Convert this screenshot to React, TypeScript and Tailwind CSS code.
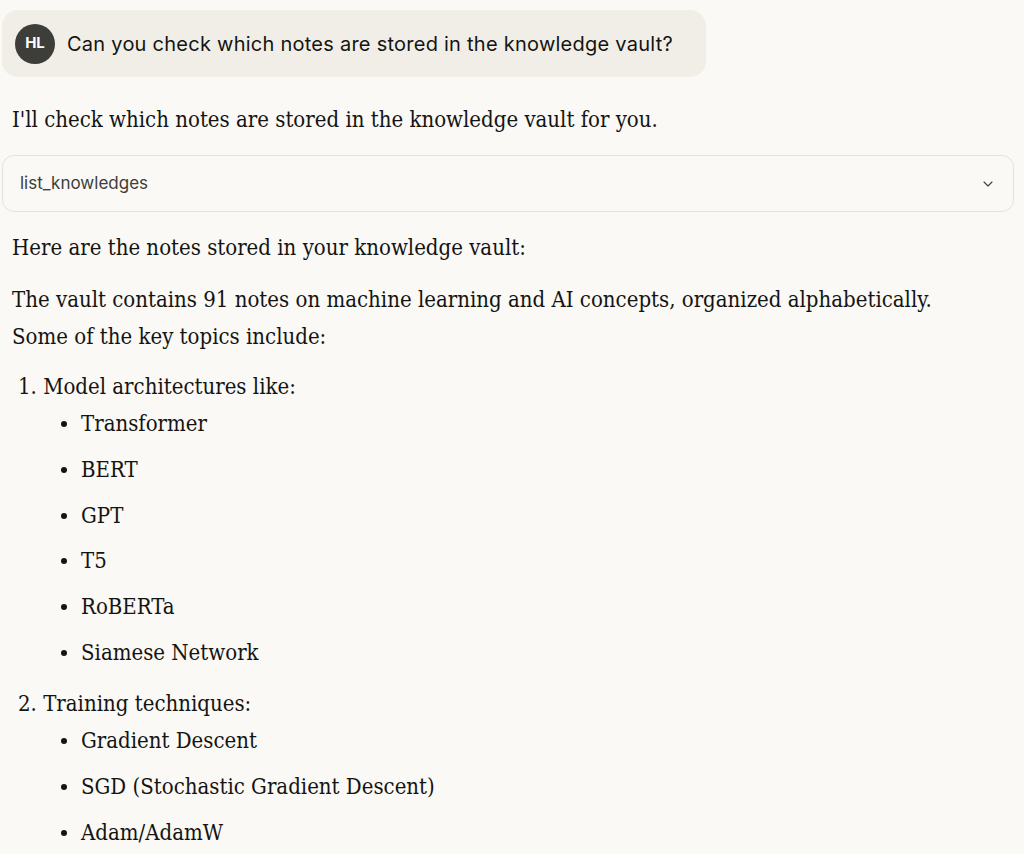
import { ChevronDown } from "lucide-react";

const architectures = ["Transformer", "BERT", "GPT", "T5", "RoBERTa", "Siamese Network"];
const techniques = ["Gradient Descent", "SGD (Stochastic Gradient Descent)", "Adam/AdamW"];

const serif = "font-['DejaVu_Serif_Condensed','DejaVu_Serif',serif] [font-stretch:condensed] text-[22px]";

function Bullets({ items }: { items: string[] }) {
	return (
		<ul className="flex flex-col gap-[13.8px] pl-[43px] pt-[5px]">
			{items.map((item) => (
				<li key={item} className="flex items-center gap-[14px] leading-[32px]">
					<span className="size-[6px] rounded-full bg-[#141413] shrink-0" />
					<span>{item}</span>
				</li>
			))}
		</ul>
	);
}

export default function App() {
	return (
		<div className="min-h-[854px] bg-[#faf9f5] text-[#141413] px-[2px] pt-[10px] overflow-hidden">
			<div className="w-[704px] h-[67px] rounded-[16px] bg-[#f0eee6] flex items-center gap-[12px] pl-[13px]">
				<div className="size-[40px] rounded-full bg-[#3d3d3a] text-white flex items-center justify-center text-[15px] font-bold font-['Inter',sans-serif] shrink-0">
					HL
				</div>
				<p className="font-['Inter',sans-serif] text-[20px] tracking-[0.25px]">
					Can you check which notes are stored in the knowledge vault?
				</p>
			</div>

			<div className={`${serif} px-[10px]`}>
				<p className="pt-[27px] leading-[32px]">I'll check which notes are stored in the knowledge vault for you.</p>
			</div>

			<div className="mt-[19px] mr-[8px] h-[57px] rounded-[12px] border border-[#e5e2d9] flex items-center justify-between pl-[17px] pr-[17px]">
				<span className="font-['Inter',sans-serif] text-[17px] text-[#3d3d3a]">list_knowledges</span>
				<ChevronDown className="size-[16px] text-[#3d3d3a]" strokeWidth={1.6} />
			</div>

			<div className={`${serif} pl-[10px] w-[990px]`}>
				<p className="pt-[20px] leading-[32px]">Here are the notes stored in your knowledge vault:</p>
				<p className="pt-[16.5px] leading-[37px]">
					The vault contains 91 notes on machine learning and AI concepts, organized alphabetically. Some of the
					key topics include:
				</p>
				<ol className="pt-[16.5px]">
					<li className="pl-[6px]">
						<div className="leading-[32px]">1. Model architectures like:</div>
						<Bullets items={architectures} />
					</li>
					<li className="pl-[6px] pt-[19px]">
						<div className="leading-[32px]">2. Training techniques:</div>
						<Bullets items={techniques} />
					</li>
				</ol>
			</div>
		</div>
	);
}
